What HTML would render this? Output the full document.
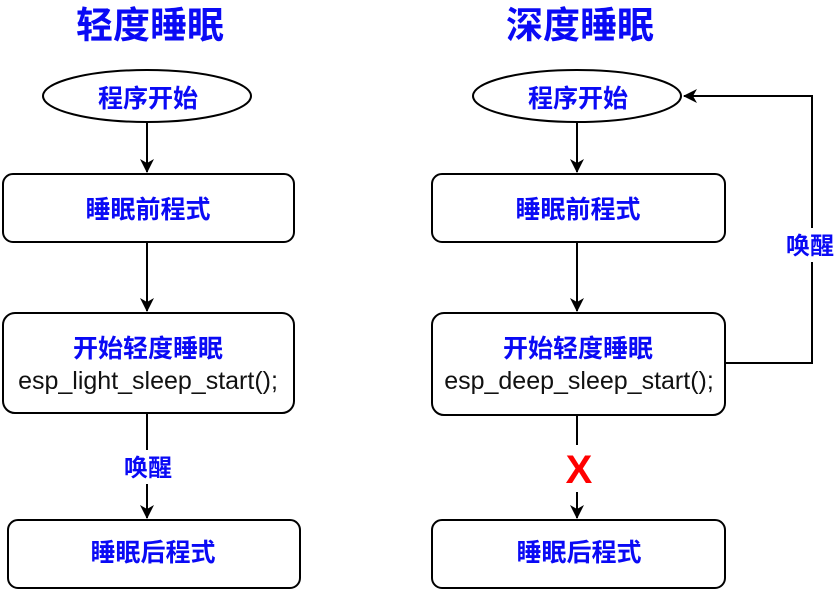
<!DOCTYPE html>
<html><head><meta charset="utf-8"><style>
html,body{margin:0;padding:0;background:#fff;width:839px;height:591px;overflow:hidden}
svg{display:block}
.cn{font-family:"Liberation Sans","Noto Sans CJK SC",sans-serif;font-weight:bold;fill:#0a0af5}
.en{font-family:"Liberation Sans",sans-serif;fill:#111}
</style></head><body>
<svg width="839" height="591" viewBox="0 0 839 591">
<defs><marker id="a" markerWidth="14" markerHeight="14" refX="13" refY="7" orient="auto" markerUnits="userSpaceOnUse"><path d="M0,0 L14,7 L0,14 L4,7 Z" fill="#000"/></marker></defs>
<g stroke="#000" stroke-width="2" fill="none">
<ellipse cx="147" cy="96" rx="104" ry="26" fill="#fff"/>
<line x1="147" y1="122" x2="147" y2="172" marker-end="url(#a)"/>
<rect x="3" y="174" width="291" height="68" rx="10" fill="#fff"/>
<line x1="147" y1="242" x2="147" y2="311" marker-end="url(#a)"/>
<rect x="3" y="313" width="291" height="100" rx="12" fill="#fff"/>
<line x1="147" y1="413" x2="147" y2="518" marker-end="url(#a)"/>
<rect x="8" y="520" width="292" height="68" rx="10" fill="#fff"/>
<ellipse cx="577" cy="96" rx="104" ry="26" fill="#fff"/>
<line x1="577" y1="122" x2="577" y2="172" marker-end="url(#a)"/>
<rect x="432" y="174" width="293" height="68" rx="10" fill="#fff"/>
<line x1="577" y1="242" x2="577" y2="311" marker-end="url(#a)"/>
<rect x="432" y="313" width="293" height="102" rx="12" fill="#fff"/>
<line x1="577" y1="415" x2="577" y2="445"/>
<line x1="577" y1="492" x2="577" y2="518" marker-end="url(#a)"/>
<rect x="432" y="520" width="293" height="68" rx="10" fill="#fff"/>
<polyline points="725,363 812,363 812,96 684,96" marker-end="url(#a)"/>
</g>
<rect x="116" y="450" width="64" height="34" fill="#fff"/>
<rect x="780" y="228" width="59" height="34" fill="#fff"/>
<g class="cn" text-anchor="middle">
<text x="150" y="38" font-size="37">轻度睡眠</text>
<text x="580" y="38" font-size="37">深度睡眠</text>
<text x="148" y="107" font-size="25">程序开始</text>
<text x="578" y="107" font-size="25">程序开始</text>
<text x="148" y="218" font-size="25">睡眠前程式</text>
<text x="578" y="218" font-size="25">睡眠前程式</text>
<text x="148" y="357" font-size="25">开始轻度睡眠</text>
<text x="578" y="357" font-size="25">开始轻度睡眠</text>
<text x="153" y="561" font-size="25">睡眠后程式</text>
<text x="579" y="561" font-size="25">睡眠后程式</text>
<text x="148" y="476" font-size="24">唤醒</text>
<text x="810" y="254" font-size="24">唤醒</text>
</g>
<g class="en" text-anchor="middle" font-size="25">
<text x="148" y="389">esp_light_sleep_start();</text>
<text x="579" y="389">esp_deep_sleep_start();</text>
</g>
<text x="579" y="483" text-anchor="middle" font-family="Liberation Sans,sans-serif" font-weight="bold" font-size="40" fill="#ff0000">X</text>
</svg>
</body></html>
